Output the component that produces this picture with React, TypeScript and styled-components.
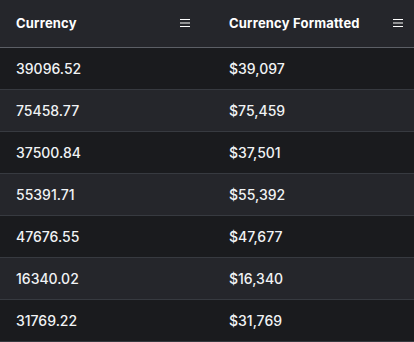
import { FC } from 'react';
import styled, { createGlobalStyle } from 'styled-components';

const rows = [
    { value: 39096.52 },
    { value: 75458.77 },
    { value: 37500.84 },
    { value: 55391.71 },
    { value: 47676.55 },
    { value: 16340.02 },
    { value: 31769.22 },
];

const formatCurrency = (n: number) =>
    '$' + Math.round(n).toLocaleString('en-US');

const GlobalStyle = createGlobalStyle`
    html, body {
        margin: 0;
        padding: 0;
        background: #1a1b1e;
        overflow: hidden;
    }
    body {
        font-family: Inter, "Liberation Sans", Arial, sans-serif;
    }
`;

const MenuIcon: FC = () => (
    <svg width="12" height="10" viewBox="0 0 12 10" fill="none">
        <path d="M1 1.5h10M1 5h10M1 8.5h10" stroke="#fff" strokeWidth="1.2" />
    </svg>
);

export const App: FC = () => {
    return (
        <>
            <GlobalStyle />
            <TableWrap>
                <Table>
                    <colgroup>
                        <col style={{ width: 213 }} />
                        <col style={{ width: 213 }} />
                    </colgroup>
                    <thead>
                        <tr>
                            <HeadCell>
                                <HeadInner>
                                    <span>Currency</span>
                                    <IconSlot>
                                        <MenuIcon />
                                    </IconSlot>
                                </HeadInner>
                            </HeadCell>
                            <HeadCell>
                                <HeadInner>
                                    <span>Currency Formatted</span>
                                    <IconSlot>
                                        <MenuIcon />
                                    </IconSlot>
                                </HeadInner>
                            </HeadCell>
                        </tr>
                    </thead>
                    <tbody>
                        {rows.map((r, i) => (
                            <Row key={i} striped={i % 2 === 1}>
                                <Cell>{r.value.toFixed(2)}</Cell>
                                <Cell>{formatCurrency(r.value)}</Cell>
                            </Row>
                        ))}
                    </tbody>
                </Table>
            </TableWrap>
        </>
    );
};

const TableWrap = styled.div`
    width: 414px;
    height: 342px;
    overflow: hidden;
    background: #1a1b1e;
`;

const Table = styled.table`
    width: 426px;
    table-layout: fixed;
    border-collapse: collapse;
    font-size: 14px;
`;

const HeadCell = styled.th`
    height: 47px;
    padding: 0 16px;
    background: #25262b;
    color: #ffffff;
    font-weight: 700;
    font-size: 13px;
    letter-spacing: 0.2px;
    text-align: left;
    border-bottom: 1px solid #5c5f66;
    box-sizing: border-box;
`;

const HeadInner = styled.div`
    display: flex;
    align-items: center;
    justify-content: space-between;
`;

const IconSlot = styled.span`
    display: flex;
    align-items: center;
    margin-right: 6px;
`;

const Row = styled.tr<{ striped: boolean }>`
    background: ${(p) => (p.striped ? '#25262b' : '#1a1b1e')};
`;

const Cell = styled.td`
    height: 42px;
    padding: 0 16px;
    color: #f1f3f5;
    font-weight: 500;
    border-bottom: 1px solid #373a40;
    box-sizing: border-box;
`;

export default App;
